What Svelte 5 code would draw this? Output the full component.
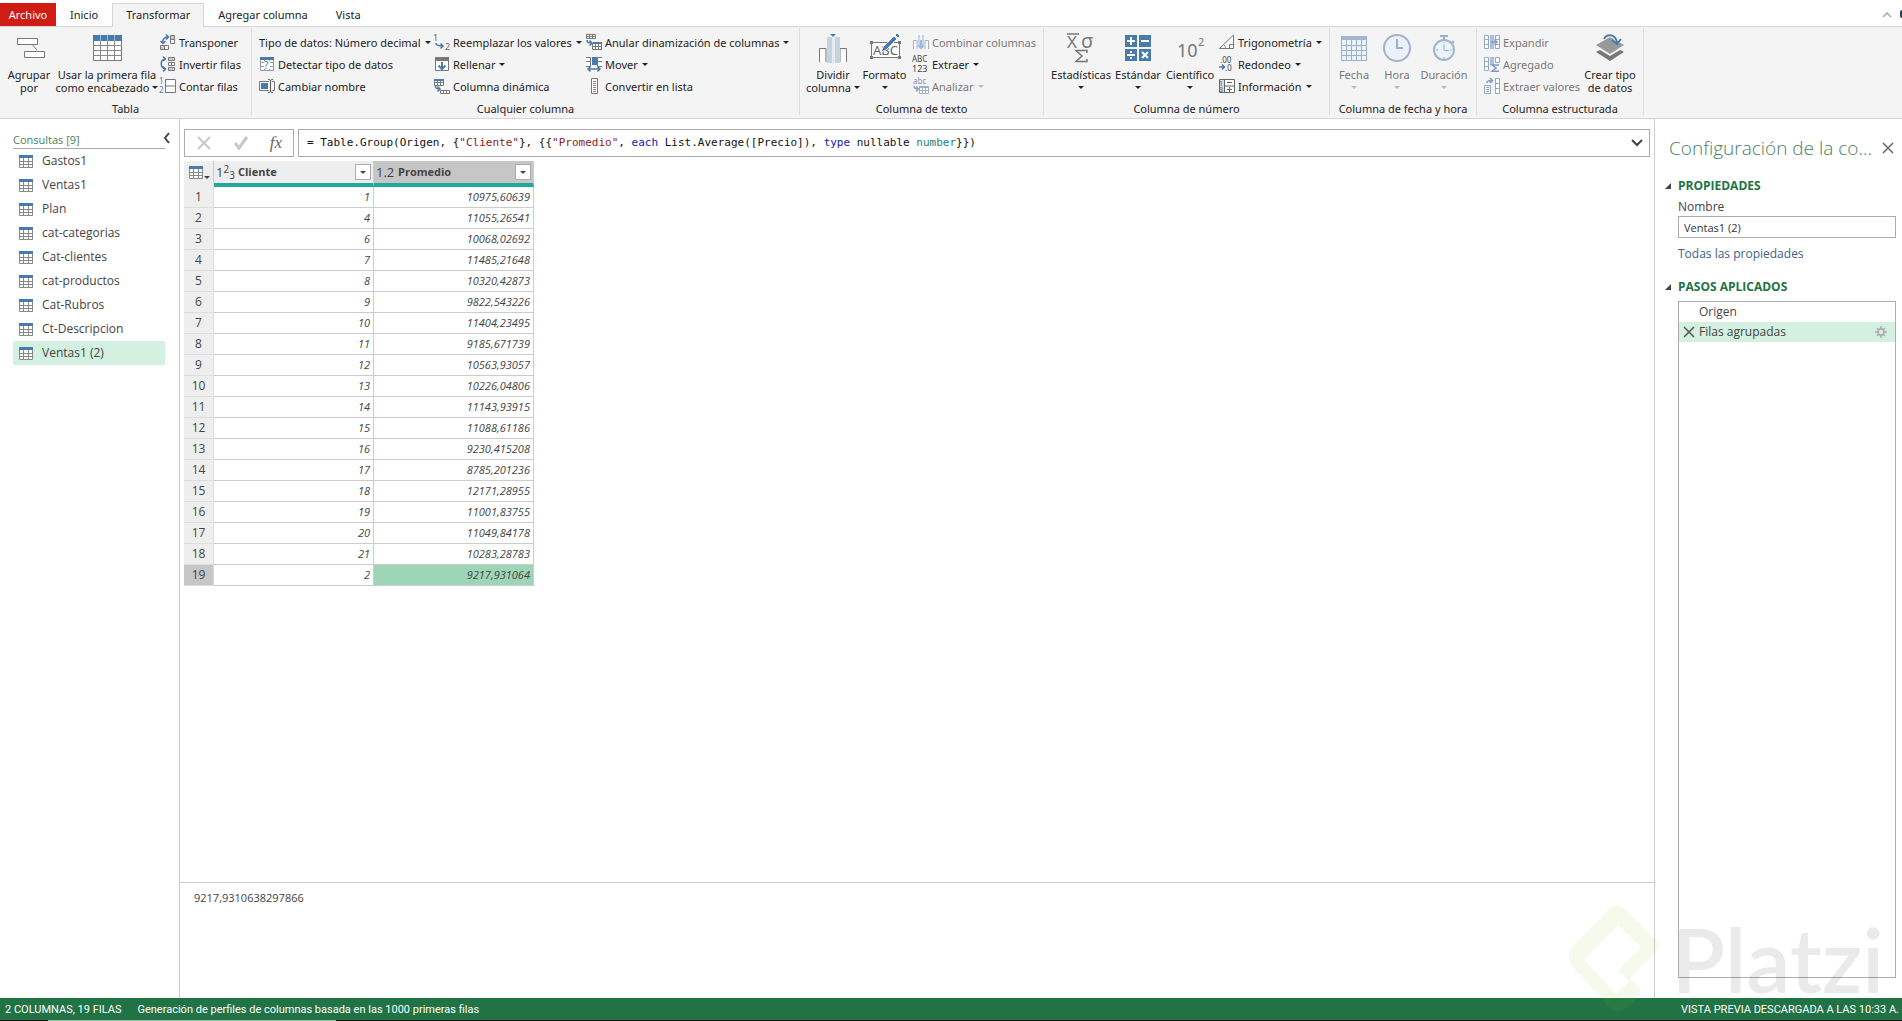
<script lang="ts">
    type Command = { label: string, icon?: string, big?: boolean, menu?: boolean, below?: boolean, disabled?: boolean }
    type Group = { title: string, css: string, columns: Command[][] }

    let tabs: string[] = ['Inicio', 'Transformar', 'Agregar columna', 'Vista']
    let activeTab: string = $state('Transformar')

    const groups: Group[] = [
        {
            title: 'Tabla', css: 'tabla', columns: [
                [{ label: 'Agrupar\npor', icon: 'agrupar', big: true }],
                [{ label: 'Usar la primera fila\ncomo encabezado', icon: 'encabezado', big: true, menu: true }],
                [
                    { label: 'Transponer', icon: 'transponer' },
                    { label: 'Invertir filas', icon: 'invertir' },
                    { label: 'Contar filas', icon: 'contar' }
                ]
            ]
        },
        {
            title: 'Cualquier columna', css: 'cualquier', columns: [
                [
                    { label: 'Tipo de datos: Número decimal', menu: true },
                    { label: 'Detectar tipo de datos', icon: 'detectar' },
                    { label: 'Cambiar nombre', icon: 'nombre' }
                ],
                [
                    { label: 'Reemplazar los valores', icon: 'reemplazar', menu: true },
                    { label: 'Rellenar', icon: 'rellenar', menu: true },
                    { label: 'Columna dinámica', icon: 'dinamica' }
                ],
                [
                    { label: 'Anular dinamización de columnas', icon: 'anular', menu: true },
                    { label: 'Mover', icon: 'mover', menu: true },
                    { label: 'Convertir en lista', icon: 'lista' }
                ]
            ]
        },
        {
            title: 'Columna de texto', css: 'texto', columns: [
                [{ label: 'Dividir\ncolumna', icon: 'dividir', big: true, menu: true }],
                [{ label: 'Formato', icon: 'formato', big: true, below: true }],
                [
                    { label: 'Combinar columnas', icon: 'combinar', disabled: true },
                    { label: 'Extraer', icon: 'extraer', menu: true },
                    { label: 'Analizar', icon: 'analizar', menu: true, disabled: true }
                ]
            ]
        },
        {
            title: 'Columna de número', css: 'numero', columns: [
                [{ label: 'Estadísticas', icon: 'estadisticas', big: true, below: true }],
                [{ label: 'Estándar', icon: 'estandar', big: true, below: true }],
                [{ label: 'Científico', icon: 'cientifico', big: true, below: true }],
                [
                    { label: 'Trigonometría', icon: 'trigonometria', menu: true },
                    { label: 'Redondeo', icon: 'redondeo', menu: true },
                    { label: 'Información', icon: 'informacion', menu: true }
                ]
            ]
        },
        {
            title: 'Columna de fecha y hora', css: 'fecha', columns: [
                [{ label: 'Fecha', icon: 'fecha', big: true, below: true, disabled: true }],
                [{ label: 'Hora', icon: 'hora', big: true, below: true, disabled: true }],
                [{ label: 'Duración', icon: 'duracion', big: true, below: true, disabled: true }]
            ]
        },
        {
            title: 'Columna estructurada', css: 'estructurada', columns: [
                [
                    { label: 'Expandir', icon: 'expandir', disabled: true },
                    { label: 'Agregado', icon: 'agregado', disabled: true },
                    { label: 'Extraer valores', icon: 'valores', disabled: true }
                ],
                [{ label: 'Crear tipo\nde datos', icon: 'crear', big: true }]
            ]
        }
    ]

    // small icons are drawn on 16x16, big ones on 32x32
    const icons: Record<string, string> = {
        agrupar: '<g fill="#fff" stroke="#777"><path d="M18 12l6 7" /><path d="M4.500 7.500h20v6h-20zM11.500 20.500h20v6h-20z"/></g>',
        encabezado: '<path fill="#fff" stroke="#777" d="M2.500 4.500h28v25h-28z"/><path fill="#4a7aab" d="M2 4h29v6H2z"/><path fill="none" stroke="#888" d="M2 14.500h29M2 19.500h29M2 24.500h29M9.500 10v20M16.500 10v20M23.500 10v20"/><path stroke="#9fbbd6" d="M9.500 4v6M16.500 4v6M23.500 4v6"/>',
        transponer: '<path fill="none" stroke="#777" d="M10.500 1.500h4v8h-4zM10 5.500h5M.500 11.500h8v4h-8zM4.500 11v5"/><path fill="#ccc" d="M11 2h3v3h-3zM1 12h3v3H1z"/><path fill="none" stroke="#4a7aab" stroke-width="1.500" d="M3 9c-1-3 1-6 5-6M6 .500L8.500 3 6 5.500M.500 7L3 9.500 5.500 7"/>',
        invertir: '<path fill="#fff" stroke="#777" d="M8.500 1.500h6v3h-6zM8.500 6.500h6v3h-6zM8.500 11.500h6v3h-6zM11.500 6v4"/><path fill="#ccc" d="M9 2h5v2H9zM9 12h5v2H9z"/><path fill="none" stroke="#4a7aab" stroke-width="1.500" d="M5 3C0 4 0 11 5 13M3 .500L5.500 3 3 5M3 10.500L5.500 13 3 15.500"/>',
        contar: '<text x="-1" y="6" font-size="8" fill="#4a7aab">1</text><text x="-1" y="15" font-size="8" fill="#4a7aab">2</text><path fill="#fff" stroke="#777" d="M5.500 1.500h10v13h-10zM5 8h11"/>',
        detectar: '<path fill="#fff" stroke="#999" d="M1.500 1.500h13v13h-13zM1 6.500h14M1 10.500h14M5.500 4v11M10.500 4v11"/><path fill="#4a7aab" d="M1 1h14v3H1z"/><path fill="#fff" d="M5 5h6v8H5z"/><text x="5" y="13" font-size="10" fill="#4a7aab">?</text>',
        nombre: '<path fill="#fff" stroke="#777" d="M10 3.500H.500v9H10M13 3.500h2.500v9H13"/><path fill="#4a7aab" d="M2 5h7v6H2z"/><path fill="none" stroke="#555" d="M9 1.500c2 0 2.500.500 2.500 2v9c0 1.500-.500 2-2.500 2M14 1.500c-2 0-2.500.500-2.500 2v9c0 1.500.500 2 2.500 2"/>',
        reemplazar: '<text x="-1" y="7" font-size="9" fill="#666">1</text><text x="11" y="16" font-size="9" fill="#666">2</text><path fill="none" stroke="#4a7aab" stroke-width="1.500" d="M2 9c0 2.500 2 3 7 3M6.500 9.500L9 12l-2.500 2.500"/>',
        rellenar: '<path fill="#fff" stroke="#777" d="M1.500 1.500h13v13h-13z"/><path fill="#777" d="M1 1h14v4H1z"/><path fill="none" stroke="#4a7aab" stroke-width="2" d="M8 6v7M4.500 9.500L8 13l3.500-3.500"/>',
        dinamica: '<path fill="#fff" stroke="#777" d="M.500 1.500h9v6h-9zM.500 4.500h9M3.500 2v6M6.500 2v6M6.500 12.500h9v3h-9zM9.500 12v4M12.500 12v4"/><path fill="#4a7aab" d="M0 1h10v2H0z"/><path fill="none" stroke="#4a7aab" stroke-width="1.500" d="M1.500 8c0 2.500 1 3 4 3M3.500 8.500L6 11l-2.500 2.500"/>',
        anular: '<path fill="#fff" stroke="#777" d="M.500 .500h9v4h-9zM0 2.500h10M3.500 0v5M6.500 0v5M6.500 9.500h9v6h-9zM6 12.500h10M9.500 9v7M12.500 9v7"/><path fill="#4a7aab" d="M7 8h9v2H7z"/><path fill="none" stroke="#4a7aab" stroke-width="1.500" d="M1 6c0 2.500 1 3 5 3M3.500 6.500L6 9l-2.500 2.500"/>',
        mover: '<path fill="#fff" stroke="#777" d="M0 1.500h4.500v9H0M16 1.500h-4.500v9H16M0 5.500h4M12 5.500h4"/><path fill="#4a7aab" d="M6 1h5v8H6z"/><path fill="none" stroke="#4a7aab" stroke-width="1.500" d="M2 13h12M4.500 10.500L2 13l2.500 2.500M11.500 10.500L14 13l-2.500 2.500"/>',
        lista: '<path fill="#fff" stroke="#777" d="M5.500 .500h6v15h-6z"/><path stroke="#888" d="M7 3.500h3M7 5.500h3M7 7.500h3M7 9.500h3M7 11.500h3M7 13.500h3"/>',
        dividir: '<path fill="#fff" d="M3 18h26v13H3z"/><path fill="none" stroke="#777" d="M2.500 31V17.500H9V31M29.500 31V17.500H23V31"/><path fill="#c5d3e0" d="M10 6h5v26h-5zM18 6h5v26h-5z"/><path fill="#e4ebf1" d="M15 7h3v25h-3z"/><path fill="#4a7aab" d="M13 3h6l-3 3z"/>',
        formato: '<path fill="#fff" stroke="#777" d="M2.500 11.500h28v15h-28z"/><text x="4" y="24" font-size="13" fill="#666">ABC</text><path fill="#777" d="M1 10h3v3H1zM1 25h3v3H1zM29 25h3v3h-3zM29 10h3v3h-3z"/><path fill="#4a7aab" stroke="#f5f4f5" d="M12 21l2-5L25 5l3 3-11 11zM26 4l2-2 3 3-2 2z"/>',
        combinar: '<path fill="#fff" stroke="#9fb0c6" d="M.500 15V6.500H4V15M15.500 15V6.500H12V15"/><path fill="#c4d5ea" d="M5 1h2v12H5zM9 1h2v12H9z"/><path fill="none" stroke="#9fb8d8" stroke-width="2" d="M8 6v8M5.500 11.500L8 14l2.500-2.500"/>',
        extraer: '<text x="-1" y="6" font-size="8" fill="#444">ABC</text><text x="-1" y="16" font-size="9" fill="#444">123</text>',
        analizar: '<text x="0" y="6" font-size="8" fill="#8095b5">abc</text><path fill="#fff" stroke="#9fb0c6" d="M6.500 8.500h9v7h-9zM6 12.500h10M9.500 8v8M12.500 8v8"/><path fill="#9fb0c6" d="M6 8h10v2H6z"/><path fill="none" stroke="#8ba4c5" stroke-width="1.500" d="M1 8c0 2 1 3 4 3M3 8.500L5.500 11 3 13.500"/>',
        estadisticas: '<text x="2" y="17" font-size="17" fill="#777">X</text><text x="16" y="17" font-size="20" fill="#777">σ</text><path stroke="#777" stroke-width="1.500" d="M2 3h12"/><path fill="none" stroke="#777" stroke-width="1.500" d="M22 22v-2.500H11l6 5.500-6 5.500h11V28"/>',
        estandar: '<path fill="#4a7aab" d="M3 4h12v12H3zM17 4h12v12H17zM3 18h12v12H3zM17 18h12v12H17z"/><path stroke="#fff" stroke-width="2" d="M5 10h8M9 6v8M19 10h8M5 24h8M20 21l6 6M26 21l-6 6"/><path fill="#fff" d="M8 20h2v2H8zM8 26h2v2H8z"/>',
        cientifico: '<text x="3" y="26" font-size="18" fill="#777">10</text><text x="24" y="15" font-size="11" fill="#777">2</text>',
        trigonometria: '<path fill="#fff" stroke="#777" d="M.500 14.500L14.500 1v13.500zM10.500 14v-3.500h4"/><path fill="none" stroke="#777" d="M5 11c1 1 1.500 2 1.500 3.500"/>',
        redondeo: '<text x="1" y="7" font-size="8" fill="#444">.00</text><text x="6" y="15" font-size="8" fill="#444">.0</text><path fill="none" stroke="#4a7aab" stroke-width="1.500" d="M0 11h5M3 8.500L5.500 11 3 13.500"/>',
        informacion: '<path fill="#fff" stroke="#666" d="M.500 1.500h15v13H.500zM5.500 1v14M5 8h11M8 4.500h5M8 11.500h5M10.500 9v5"/><path fill="#d5dfe8" d="M1 2h4v12H1z"/><text x="0" y="8" font-size="7" fill="#555">1</text><text x="0" y="14" font-size="7" fill="#555">3</text>',
        fecha: '<path fill="#eaf2fc" stroke="#9fb0c6" d="M3.500 6.500h25v23h-25zM3 14.500h26M3 19.500h26M3 24.500h26M8.500 9v21M13.500 9v21M18.500 9v21M23.500 9v21"/><path fill="#a4b4c9" d="M3 5h26v4H3z"/>',
        hora: '<circle cx="16" cy="17" r="13" fill="#eaf2fc" stroke="#a4b4c9" stroke-width="2"/><path fill="none" stroke="#9fb0c6" stroke-width="2" d="M16 8v9h6"/>',
        duracion: '<circle cx="16" cy="19" r="10" fill="#eaf2fc" stroke="#a4b4c9" stroke-width="2"/><path fill="none" stroke="#9fb0c6" stroke-width="2" d="M12 5h8M16 5v4M24 10l2 2"/><path fill="none" stroke="#9fb0c6" d="M16 13v6.500h5M16 11v1M16 26v2M8 19h2M22 19h2"/>',
        expandir: '<path fill="#fff" stroke="#91a8c8" d="M.500 1.500h4v13h-4zM0 5.500h5M0 10.500h5M11.500 1.500h4v13h-4zM11 5.500h5M11 10.500h5"/><path fill="#a9bfdc" d="M6 1h4v14H6z"/><path fill="none" stroke="#7f9cc4" stroke-width="1.500" d="M7 8h6M10.500 5.500L13 8l-2.500 2.500"/>',
        agregado: '<path fill="#fff" stroke="#91a8c8" d="M.500 1.500h4v13h-4zM0 5.500h5M0 10.500h5M11.500 1.500h4v5h-4z"/><path fill="#a9bfdc" d="M6 1h4v8H6z"/><path fill="none" stroke="#8199bd" stroke-width="1.500" d="M15 9H8l4 3-4 3.200h7"/>',
        valores: '<path fill="#fff" stroke="#91a8c8" d="M11.500 .500h4v15h-4zM11 5.500h5M11 10.500h5M.500 7.500h6v8h-6zM2 9.500h3M2 11.500h3M2 13.500h3"/><path fill="none" stroke="#7f9cc4" stroke-width="1.500" d="M3 5c0-2 1-2.500 5-2.500M6 0l2.500 2.500L6 5"/>',
        crear: '<path fill="#777" d="M2 21l4-2 10 6 10-6 4 2-14 9z"/><path fill="#999" d="M2 14l14-8 14 8-14 9z"/><path fill="none" stroke="#f5f4f5" stroke-width="4" d="M9 8c4-6 13-5 14 4"/><path fill="none" stroke="#4a7aab" stroke-width="2" d="M10 8c3-6 12-5 13 4M18 9l5 4 4-5"/>'
    }

    const queries: string[] = ['Gastos1', 'Ventas1', 'Plan', 'cat-categorias', 'Cat-clientes', 'cat-productos', 'Cat-Rubros', 'Ct-Descripcion', 'Ventas1 (2)']
    let activeQuery: string = $state('Ventas1 (2)')
    let queryName: string = $state('Ventas1 (2)')

    const rows: [string, string][] = [
        ['1', '10975,60639'],
        ['4', '11055,26541'],
        ['6', '10068,02692'],
        ['7', '11485,21648'],
        ['8', '10320,42873'],
        ['9', '9822,543226'],
        ['10', '11404,23495'],
        ['11', '9185,671739'],
        ['12', '10563,93057'],
        ['13', '10226,04806'],
        ['14', '11143,93915'],
        ['15', '11088,61186'],
        ['16', '9230,415208'],
        ['17', '8785,201236'],
        ['18', '12171,28955'],
        ['19', '11001,83755'],
        ['20', '11049,84178'],
        ['21', '10283,28783'],
        ['2', '9217,931064']
    ]
    let selectedRow: number = $state(18)
</script>

{#snippet tableIcon()}
    <svg class="table-icon" viewBox="0 0 14 14" aria-hidden="true">
        <path fill="#fff" stroke="#888" d="M.5 1.500h13v12H.5zM1 7.500h12M1 10.500h12M4.500 4v9M9.500 4v9" />
        <path fill="#4a7aab" d="M0 1h14v3H0z" />
    </svg>
{/snippet}

<div class="window">
    <nav class="tabs">
        <button class="tab file">Archivo</button>
        {#each tabs as tab}
            <button class="tab" class:active={tab === activeTab} onclick={() => activeTab = tab}>{tab}</button>
        {/each}
        <button class="collapse" aria-label="Contraer la cinta">
            <svg width="10" height="6" viewBox="0 0 10 6"><path d="M1 5l4-4 4 4" fill="none" stroke="#aaa" stroke-width="1.5" /></svg>
        </button>
        <button class="help" aria-label="Ayuda"></button>
    </nav>

    <div class="ribbon">
        {#each groups as group}
            <section class="group {group.css}">
                <div class="commands">
                    {#each group.columns as column}
                        <div class="stack">
                            {#each column as command}
                                <button class={command.big ? 'big' : 'small'} disabled={command.disabled}>
                                    {#if command.icon}
                                        <svg class="icon" viewBox={command.big ? '0 0 32 32' : '0 0 16 16'} aria-hidden="true">{@html icons[command.icon]}</svg>
                                    {/if}
                                    <span class="label">{command.label}{#if command.menu}<i class="caret"></i>{/if}</span>
                                    {#if command.below}<i class="caret below"></i>{/if}
                                </button>
                            {/each}
                        </div>
                    {/each}
                </div>
                <h2>{group.title}</h2>
            </section>
        {/each}
    </div>

    <div class="workspace">
        <aside class="queries">
            <header>
                <h2>Consultas [9]</h2>
                <button aria-label="Contraer el panel">
                    <svg width="8" height="12" viewBox="0 0 8 12"><path d="M6 1L2 6l4 5" fill="none" stroke="#444" stroke-width="2" /></svg>
                </button>
            </header>
            <ul>
                {#each queries as query}
                    <li>
                        <button class:selected={query === activeQuery} onclick={() => activeQuery = query}>
                            {@render tableIcon()}
                            {query}
                        </button>
                    </li>
                {/each}
            </ul>
        </aside>

        <main>
            <div class="formula-bar">
                <div class="formula-tools">
                    <button aria-label="Cancelar">
                        <svg width="16" height="16" viewBox="0 0 16 16"><path d="M2 2l12 12M14 2L2 14" fill="none" stroke="#c8c8c8" stroke-width="2" /></svg>
                    </button>
                    <button aria-label="Aceptar">
                        <svg width="16" height="16" viewBox="0 0 16 16"><path d="M2 8l4 5 8-11" fill="none" stroke="#c8c8c8" stroke-width="3" /></svg>
                    </button>
                    <button class="fx">fx</button>
                </div>
                <div class="formula">
                    <div class="code" contenteditable="true" role="textbox" tabindex="0" aria-label="Fórmula" spellcheck="false">= Table.Group(Origen, {'{'}<span class="string">"Cliente"</span>}, {'{{'}<span class="string">"Promedio"</span>, <span class="keyword">each</span> List.Average([Precio]), <span class="keyword">type</span> nullable <span class="type">number</span>{'}})'}</div>
                    <button aria-label="Expandir la barra de fórmulas">
                        <svg width="12" height="8" viewBox="0 0 12 8"><path d="M1 1l5 5 5-5" fill="none" stroke="#444" stroke-width="2" /></svg>
                    </button>
                </div>
            </div>

            <div class="grid">
                <table>
                    <thead>
                        <tr>
                            <th class="corner"><button aria-label="Opciones de tabla">{@render tableIcon()}<i class="caret"></i></button></th>
                            <th>
                                <div class="head"><span class="kind">1<sup>2</sup><sub>3</sub></span>Cliente<button class="filter" aria-label="Filtrar Cliente"><i class="caret"></i></button></div>
                            </th>
                            <th class="current">
                                <div class="head"><span class="kind">1.2</span>Promedio<button class="filter" aria-label="Filtrar Promedio"><i class="caret"></i></button></div>
                            </th>
                        </tr>
                    </thead>
                    <tbody>
                        {#each rows as [cliente, promedio], i}
                            <tr class:selected={i === selectedRow} onclick={() => selectedRow = i}>
                                <th>{i + 1}</th>
                                <td>{cliente}</td>
                                <td>{promedio}</td>
                            </tr>
                        {/each}
                    </tbody>
                </table>
            </div>

            <div class="preview">9217,9310638297866</div>
        </main>

        <aside class="settings">
            <header>
                <h1>Configuración de la co...</h1>
                <button aria-label="Cerrar">
                    <svg width="12" height="12" viewBox="0 0 12 12"><path d="M1 1l10 10M11 1L1 11" fill="none" stroke="#666" stroke-width="1.5" /></svg>
                </button>
            </header>
            <h2><svg width="6" height="6" viewBox="0 0 6 6" aria-hidden="true"><path d="M6 0v6H0z" fill="#444" /></svg>PROPIEDADES</h2>
            <div class="properties">
                <label for="nombre">Nombre</label>
                <input id="nombre" type="text" bind:value={queryName}>
                <a href="#propiedades">Todas las propiedades</a>
            </div>
            <h2><svg width="6" height="6" viewBox="0 0 6 6" aria-hidden="true"><path d="M6 0v6H0z" fill="#444" /></svg>PASOS APLICADOS</h2>
            <ol class="steps">
                <li><span>Origen</span></li>
                <li class="selected">
                    <button aria-label="Eliminar paso">
                        <svg width="12" height="12" viewBox="0 0 12 12"><path d="M1 1l10 10M11 1L1 11" fill="none" stroke="#555" stroke-width="1.5" /></svg>
                    </button>
                    <span>Filas agrupadas</span>
                    <button aria-label="Configurar paso">
                        <svg width="12" height="12" viewBox="0 0 12 12"><path d="M6 0v12M0 6h12M2 2l8 8M10 2l-8 8" stroke="#aaa" stroke-width="1.5" /><circle cx="6" cy="6" r="3" fill="#d3f0e0" stroke="#aaa" stroke-width="1.5" /></svg>
                    </button>
                </li>
            </ol>
        </aside>
    </div>

    <footer>
        <span>2 COLUMNAS, 19 FILAS</span>
        <span>Generación de perfiles de columnas basada en las 1000 primeras filas</span>
        <span class="status">VISTA PREVIA DESCARGADA A LAS 10:33 A.</span>
    </footer>
    <div class="taskbar"></div>

    <div class="watermark">
        <svg width="92" height="108" viewBox="0 0 92 108" aria-hidden="true">
            <path fill="#8cc820" fill-rule="evenodd" d="M42 4q8-6 16 0l29 29q8 8 0 16L63 73l8 8q5 6 0 11L59 103q-8 7-16 0L5 61q-7-9 0-18zM51 20L17 55l32 34 13-13-11-11 23-23z" />
        </svg>
        <span>Platzi</span>
    </div>
</div>

<style>
    :global(body) {
        margin: 0;
    }
    * {
        box-sizing: border-box;
    }
    .window {
        position: relative;
        display: flex;
        flex-direction: column;
        min-height: 100vh;
        overflow: hidden;
        background: #fff;
        color: #444;
        font: 12px/16px "Open Sans", "Noto Sans", sans-serif;
    }
    button {
        margin: 0;
        padding: 0;
        border: 0;
        background: none;
        color: inherit;
        font: inherit;
    }
    h1, h2, ul, ol {
        margin: 0;
        padding: 0;
        font-weight: normal;
        list-style: none;
    }
    svg {
        display: block;
        flex: none;
    }
    .caret {
        display: inline-block;
        flex: none;
        border: 3px solid transparent;
        border-top-color: currentColor;
        border-bottom: 0;
    }

    /* tabs */
    .tabs {
        display: flex;
        height: 27px;
        padding-top: 3px;
        border-bottom: 1px solid #d5d5d5;
        color: #222;
        font: 11px/20px "Noto Sans", sans-serif;
    }
    .tab {
        height: 24px;
        padding: 0 13px 2px;
        border: 1px solid transparent;
        border-bottom: 0;
    }
    .tab.file {
        width: 56px;
        height: 23px;
        padding: 0;
        background: #d01c12;
        color: #fff;
    }
    .tab.active {
        border-color: #d5d5d5;
        background: #f5f4f5;
    }
    .collapse {
        margin-left: auto;
        padding-right: 8px;
    }
    .help {
        width: 2px;
        height: 8px;
        margin-top: 7px;
        border-radius: 4px 0 0 4px;
        background: #1d4457;
    }

    /* ribbon */
    .ribbon {
        display: flex;
        height: 92px;
        border-bottom: 1px solid #d5d5d5;
        background: #f5f4f5;
        color: #222;
        font: 11px/13px "Noto Sans", sans-serif;
    }
    .group {
        display: flex;
        flex-direction: column;
        margin: 1px 0 3px;
        border-right: 1px solid #dedede;
    }
    .group h2 {
        margin-top: 6px;
        font-size: 11px;
        text-align: center;
    }
    .commands {
        display: grid;
        height: 68px;
    }
    .tabla .commands {
        grid-template-columns: 58px 98px 95px;
    }
    .cualquier .commands {
        grid-template-columns: 175px 152px 217px;
        padding-left: 3px;
    }
    .texto .commands {
        grid-template-columns: 54px 49px 134px;
        padding-left: 6px;
    }
    .numero .commands {
        grid-template-columns: 60px 54px 50px 114px;
        padding-left: 7px;
    }
    .fecha .commands {
        grid-template-columns: 44px 42px 52px;
        padding: 0 6px 0 2px;
    }
    .estructurada .commands {
        grid-template-columns: 97px 66px;
        padding-left: 3px;
    }
    .stack {
        display: flex;
        flex-direction: column;
        padding-top: 3px;
    }
    .small {
        display: flex;
        align-items: center;
        gap: 3px;
        height: 22px;
        padding-left: 4px;
        white-space: nowrap;
    }
    .small .label {
        display: flex;
        align-items: center;
        gap: 4px;
    }
    .icon {
        width: 16px;
        height: 16px;
        overflow: visible;
    }
    .big {
        display: flex;
        flex-direction: column;
        align-items: center;
        white-space: pre;
    }
    .big .icon {
        width: 32px;
        height: 32px;
        margin-bottom: 5px;
    }
    .big .label .caret {
        margin: 0 0 3px 3px;
    }
    .big .below {
        margin-top: 5px;
    }
    button:disabled {
        color: #777;
    }
    button:disabled .caret {
        color: #bbb;
    }

    /* queries pane */
    .workspace {
        display: flex;
        flex: 1;
    }
    .queries {
        width: 180px;
        padding: 11px 8px 0 13px;
        border-right: 1px solid #ccc;
    }
    .queries header {
        display: flex;
        justify-content: space-between;
        height: 19px;
    }
    .queries header h2 {
        width: 152px;
        padding-top: 2px;
        border-bottom: 1px solid #aaa;
        color: #4b8262;
        font-size: 11px;
        line-height: 16px;
    }
    .queries header button {
        height: 16px;
        margin-left: -4px;
    }
    .queries li button {
        display: flex;
        align-items: center;
        gap: 9px;
        width: 152px;
        height: 24px;
        padding-left: 6px;
    }
    .queries li .selected {
        background: #d3f0e0;
    }
    .table-icon {
        width: 14px;
        height: 14px;
    }

    /* formula bar */
    main {
        display: flex;
        flex: 1;
        flex-direction: column;
        min-width: 0;
    }
    .formula-bar {
        display: flex;
        gap: 4px;
        padding: 10px 4px 4px;
    }
    .formula-tools, .formula {
        display: flex;
        align-items: center;
        height: 28px;
        border: 1px solid #ababab;
    }
    .formula-tools {
        justify-content: space-between;
        width: 110px;
        padding: 0 11px;
    }
    .fx {
        color: #666;
        font: italic 17px/20px "Liberation Serif", serif;
    }
    .formula {
        flex: 1;
        justify-content: space-between;
        padding: 0 6px 0 8px;
    }
    .code {
        flex: 1;
        outline: 0;
        color: #111;
        font: 11px/16px "DejaVu Sans Mono", monospace;
        white-space: pre;
    }
    .string {
        color: #8c1c1c;
    }
    .keyword {
        color: #1414b4;
    }
    .type {
        color: #1c7f86;
    }

    /* data grid */
    .grid {
        flex: 1;
        padding-left: 4px;
    }
    table {
        width: 350px;
        border-collapse: separate;
        border-spacing: 0;
        table-layout: fixed;
    }
    th, td {
        height: 21px;
        padding: 0 3px;
        border-right: 1px solid #ccc;
        border-bottom: 1px solid #ccc;
        line-height: 16px;
    }
    th {
        background: #eee;
        font-weight: normal;
    }
    tbody th {
        font-size: 12px;
        border-color: #ddd;
    }
    td {
        font-size: 11px;
        font-style: italic;
        text-align: right;
    }
    thead th {
        height: 26px;
        padding: 0 2px;
        border-bottom: 4px solid #1fa89b;
    }
    thead .corner {
        width: 30px;
        border-bottom-color: #eee;
    }
    thead .current, .selected th {
        background: #c6c6c6;
    }
    .selected td:last-child {
        background: #9fd5b7;
    }
    .corner button {
        display: flex;
        align-items: flex-end;
        gap: 1px;
        padding-left: 3px;
    }
    .head {
        display: flex;
        align-items: center;
        font-size: 11px;
        font-weight: bold;
    }
    .kind {
        width: 22px;
        font-size: 13px;
        font-weight: normal;
        text-align: left;
        white-space: nowrap;
    }
    .kind sup, .kind sub {
        font-size: 10px;
        line-height: 0;
    }
    .kind sup {
        vertical-align: 4px;
    }
    .kind sub {
        vertical-align: -2px;
    }
    .filter {
        display: flex;
        align-items: center;
        justify-content: center;
        width: 16px;
        height: 16px;
        margin-left: auto;
        border: 1px solid #ababab;
        background: #fff;
    }
    .preview {
        height: 116px;
        padding: 7px 14px;
        border-top: 1px solid #ccc;
        font-size: 11px;
    }

    /* settings pane */
    .settings {
        display: flex;
        flex-direction: column;
        width: 248px;
        padding: 14px 6px 20px 10px;
        border-left: 1px solid #ccc;
    }
    .settings header {
        display: flex;
        align-items: center;
        justify-content: space-between;
        margin-bottom: 14px;
        padding: 0 2px 0 4px;
    }
    h1 {
        color: #4b8262;
        font-size: 19px;
        font-weight: 300;
        line-height: 30px;
        white-space: nowrap;
    }
    .settings h2 {
        display: flex;
        align-items: center;
        gap: 7px;
        height: 18px;
        color: #217346;
        font-size: 12px;
        font-weight: bold;
    }
    .properties {
        display: flex;
        flex-direction: column;
        margin: 4px 0 16px 13px;
    }
    .properties input {
        height: 22px;
        margin: 1px 0 8px;
        padding: 0 5px;
        border: 1px solid #ababab;
        color: #333;
        font: inherit;
        font-size: 11px;
    }
    .properties a {
        align-self: flex-start;
        color: #41618c;
        text-decoration: none;
    }
    .steps {
        flex: 1;
        margin: 5px 0 0 13px;
        border: 1px solid #ababab;
    }
    .steps li {
        display: flex;
        align-items: center;
        height: 20px;
        padding: 0 8px 0 4px;
    }
    .steps span {
        flex: 1;
        padding-left: 4px;
    }
    .steps li:first-child span {
        padding-left: 16px;
    }
    .steps .selected {
        background: #d3f0e0;
    }

    footer {
        display: flex;
        gap: 16px;
        height: 22px;
        padding: 0 3px 0 5px;
        background: #217346;
        color: #fff;
        font: 11px/24px Roboto, sans-serif;
    }
    .status {
        margin-left: auto;
    }
    .taskbar {
        height: 1px;
        background: linear-gradient(90deg, #111 48px, #9cc4ac 48px, #9cc4ac 336px, #111 336px);
    }

    /* stamp over the lower right corner */
    .watermark {
        position: absolute;
        right: 18px;
        bottom: 8px;
        display: flex;
        gap: 12px;
        opacity: 0.08;
        color: #000;
        font: 600 88px/108px Lato, sans-serif;
        pointer-events: none;
    }
</style>
